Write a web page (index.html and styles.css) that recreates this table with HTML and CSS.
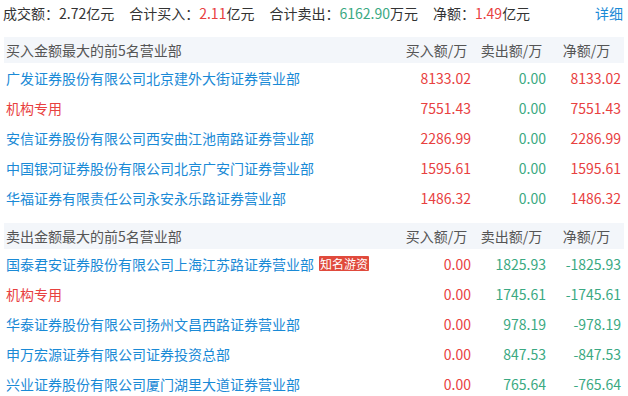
FILE: index.html
```html
<!DOCTYPE html>
<html lang="zh">
<head>
<meta charset="utf-8">
<link rel="stylesheet" href="styles.css">
</head>
<body>
<div class="summary">
  <span class="item">成交额：<span class="dark">2.72</span>亿元</span>
  <span class="item">合计买入：<span class="red">2.11</span>亿元</span>
  <span class="item">合计卖出：<span class="green">6162.90</span>万元</span>
  <span class="item">净额：<span class="red">1.49</span>亿元</span>
  <a class="detail">详细</a>
</div>

<table class="tbl">
  <thead>
    <tr><th class="name">买入金额最大的前5名营业部</th><th>买入额/万</th><th>卖出额/万</th><th>净额/万</th></tr>
  </thead>
  <tbody>
    <tr><td class="name link">广发证券股份有限公司北京建外大街证券营业部</td><td class="red">8133.02</td><td class="green">0.00</td><td class="red">8133.02</td></tr>
    <tr><td class="name red">机构专用</td><td class="red">7551.43</td><td class="green">0.00</td><td class="red">7551.43</td></tr>
    <tr><td class="name link">安信证券股份有限公司西安曲江池南路证券营业部</td><td class="red">2286.99</td><td class="green">0.00</td><td class="red">2286.99</td></tr>
    <tr><td class="name link">中国银河证券股份有限公司北京广安门证券营业部</td><td class="red">1595.61</td><td class="green">0.00</td><td class="red">1595.61</td></tr>
    <tr><td class="name link">华福证券有限责任公司永安永乐路证券营业部</td><td class="red">1486.32</td><td class="green">0.00</td><td class="red">1486.32</td></tr>
  </tbody>
</table>

<table class="tbl second">
  <thead>
    <tr><th class="name">卖出金额最大的前5名营业部</th><th>买入额/万</th><th>卖出额/万</th><th>净额/万</th></tr>
  </thead>
  <tbody>
    <tr><td class="name link">国泰君安证券股份有限公司上海江苏路证券营业部<span class="tag">知名游资</span></td><td class="red">0.00</td><td class="green">1825.93</td><td class="green">-1825.93</td></tr>
    <tr><td class="name red">机构专用</td><td class="red">0.00</td><td class="green">1745.61</td><td class="green">-1745.61</td></tr>
    <tr><td class="name link">华泰证券股份有限公司扬州文昌西路证券营业部</td><td class="red">0.00</td><td class="green">978.19</td><td class="green">-978.19</td></tr>
    <tr><td class="name link">申万宏源证券有限公司证券投资总部</td><td class="red">0.00</td><td class="green">847.53</td><td class="green">-847.53</td></tr>
    <tr><td class="name link">兴业证券股份有限公司厦门湖里大道证券营业部</td><td class="red">0.00</td><td class="green">765.64</td><td class="green">-765.64</td></tr>
  </tbody>
</table>
</body>
</html>
```

FILE: styles.css
```css
html, body {
  margin: 0;
  padding: 0;
  background: #ffffff;
}
body {
  font-family: "Noto Sans CJK SC", "Microsoft YaHei", sans-serif;
  font-size: 14px;
  color: #333333;
  overflow: hidden;
}
.summary {
  display: flex;
  align-items: center;
  height: 26px;
  padding: 0 5px 0 3px;
  margin-bottom: 11px;
  white-space: nowrap;
}
.summary .item {
  margin-right: 15px;
}
.summary .detail {
  margin-left: auto;
  color: #1a8ad6;
  cursor: pointer;
}
.dark { color: #333333; }
.red { color: #e8413f; }
.green { color: #3aa982; }
.link { color: #1a8ad6; }

.tbl {
  width: 620px;
  margin-left: 4px;
  border-collapse: collapse;
  table-layout: fixed;
}
.tbl.second {
  margin-top: 10px;
}
.tbl th {
  height: 26px;
  padding: 0;
  background: #f3f6fa;
  color: #555555;
  font-weight: normal;
  text-align: center;
  width: 75px;
}
.tbl th.name {
  width: auto;
  text-align: left;
  padding-left: 2px;
}
.tbl td {
  height: 30px;
  padding: 0 3px 0 0;
  text-align: right;
  white-space: nowrap;
}
.tbl td.name {
  text-align: left;
  padding-left: 2px;
}
.tag {
  display: inline-block;
  margin-left: 5px;
  padding: 0 1px;
  height: 15px;
  line-height: 15px;
  font-size: 12px;
  background: #e04a3c;
  color: #ffffff;
  vertical-align: 1px;
  border-radius: 1px;
}
```
